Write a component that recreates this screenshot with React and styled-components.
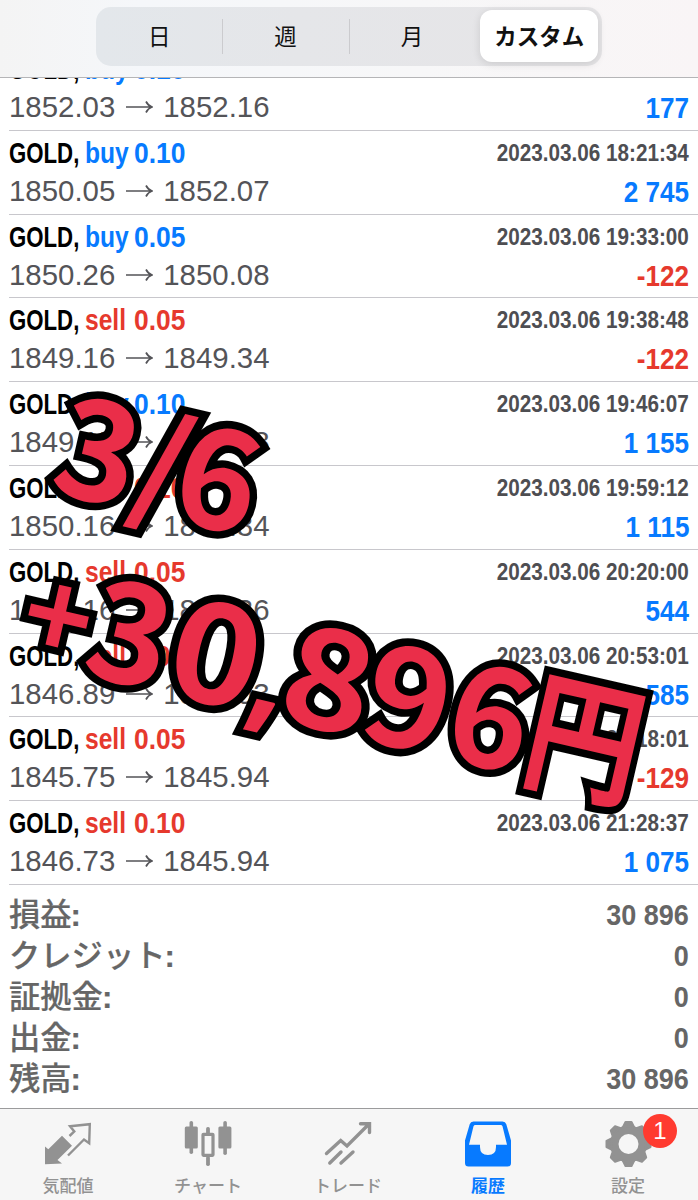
import React from "react";
import styled, { createGlobalStyle } from "styled-components";

const BLUE = "#077aff";
const RED = "#e6392d";
const GRAY = "#929292";

const latin = `"Liberation Sans", Arial, "Noto Sans CJK JP", sans-serif`;
const japanese = `"Noto Sans CJK JP", "Liberation Sans", sans-serif`;

const GlobalStyle = createGlobalStyle`
  * {
    box-sizing: border-box;
  }
  body {
    margin: 0;
    background-color: #ffffff;
    font-family: ${latin};
  }
`;

const Styled = {
  Screen: styled.div`
    position: relative;
    display: flex;
    flex-direction: column;
    width: 698px;
    height: 1200px;
    overflow: hidden;
    background-color: #ffffff;
  `,
  Header: styled.header`
    flex: none;
    height: 78px;
    padding: 7px 96px 0;
    background: linear-gradient(90deg, #f4f4f4 0%, #f5f7fa 20%, #f7f7f8 60%, #f9f5f6 100%);
    border-bottom: 1px solid #b5b5b7;
  `,
  Segments: styled.div`
    display: flex;
    width: 506px;
    height: 59px;
    padding: 3px 4px 4px 0;
    border-radius: 15px;
    background: linear-gradient(90deg, #e3e7eb 0%, #e5e6e9 40%, #e6e5e7 100%);
  `,
  Segment: styled.button`
    flex: none;
    display: flex;
    align-items: center;
    justify-content: center;
    width: ${(props) => (props.$active ? "118px" : "126.4px")};
    height: 52px;
    margin: 0 0 0 ${(props) => (props.$active ? "5px" : "0")};
    padding: 0 0 2px;
    border: 0;
    border-radius: 12px;
    background-color: ${(props) => (props.$active ? "#ffffff" : "transparent")};
    box-shadow: ${(props) => (props.$active ? "0 2px 8px rgba(0, 0, 0, 0.12)" : "none")};
    color: #111111;
    font-family: ${japanese};
    font-size: 22.5px;
    font-weight: ${(props) => (props.$active ? 700 : 400)};
  `,
  Divider: styled.div`
    flex: none;
    width: 1px;
    height: 35px;
    margin: 9px -1px 0 0;
    background-color: #cbcbce;
  `,
  List: styled.main`
    flex: none;
    height: 807px;
    padding-left: 9px;
    overflow: hidden;
  `,
  Rows: styled.div`
    margin-top: -31px;
  `,
  Row: styled.div`
    height: 83.8px;
    padding: 7px 9px 0 0;
    border-bottom: 1px solid #c8c7cc;
  `,
  Line: styled.div`
    display: flex;
    align-items: baseline;
    height: 38px;
    line-height: 30px;
  `,
  Narrow: styled.span`
    flex: none;
    width: ${(props) => (props.$width ? `${props.$width}px` : "auto")};
    margin-left: ${(props) => (props.$right ? "auto" : "0")};
    color: ${(props) => props.$color};
    font-size: ${(props) => props.$size || 30}px;
    font-weight: 700;
    white-space: nowrap;
    transform: translateY(${(props) => props.$drop || 0}px) scaleX(${(props) => props.$scale});
    transform-origin: ${(props) => (props.$right ? "right" : "left")} center;
  `,
  Prices: styled.span`
    display: flex;
    align-items: center;
    gap: 10.5px;
    color: #545458;
    font-size: 29.4px;
  `,
  Summary: styled.section`
    flex: none;
    height: 223px;
    padding: 10px 9px 0 9px;
  `,
  SummaryRow: styled.div`
    display: flex;
    align-items: center;
    height: 41px;
    color: #666666;
    line-height: 41px;
  `,
  SummaryLabel: styled.span`
    font-size: 31.3px;
    font-weight: 500;
    -webkit-text-stroke: 0.2px #666666;
  `,
  Colon: styled.span`
    margin-left: -1px;
    font-weight: 700;
  `,
  TabBar: styled.nav`
    display: flex;
    flex: none;
    height: 92px;
    margin-left: -2px;
    border-top: 1px solid #9b9b9c;
    background-color: #f6f6f6;
  `,
  Tab: styled.div`
    display: flex;
    flex-direction: column;
    align-items: center;
    width: 140px;
    padding-top: 11px;
    color: ${(props) => (props.$active ? BLUE : GRAY)};
    font-family: ${japanese};
    font-size: 17px;
    font-weight: ${(props) => (props.$active ? 700 : 500)};
    line-height: 20px;
  `,
  IconBox: styled.div`
    position: relative;
    width: 50px;
    height: 50px;
    margin-bottom: 5px;
  `,
  Badge: styled.span`
    position: absolute;
    top: -6px;
    left: 40px;
    width: 34px;
    height: 34px;
    border-radius: 50%;
    background-color: #ff3b30;
    color: #ffffff;
    font-family: ${latin};
    font-size: 24px;
    font-weight: 400;
    line-height: 34px;
    text-align: center;
  `,
  Caption: styled.div`
    position: absolute;
    left: ${(props) => props.$x}px;
    top: ${(props) => props.$y}px;
    display: flex;
    align-items: baseline;
    color: #ea2e49;
    font-weight: 700;
    line-height: 140px;
    transform: rotate(13deg);
    transform-origin: 0 0;
    -webkit-text-stroke: 15px #000000;
    paint-order: stroke fill;
    stroke-linejoin: round;
  `,
  Glyph: styled.span`
    flex: none;
    display: flex;
    justify-content: center;
    width: ${(props) => props.$width}px;
    font-family: ${(props) => props.$font || japanese};
    font-size: ${(props) => props.$size || 139}px;
    transform: translateY(${(props) => -props.$lift || 0}px) scaleX(${(props) => props.$scale || 1});
  `,
};

const segments = ["日", "週", "月", "カスタム"];

const deals = [
  { side: "buy", lots: "0.10", open: "1852.03", close: "1852.16", time: "2023.03.06 18:10:46", profit: "177" },
  { side: "buy", lots: "0.10", open: "1850.05", close: "1852.07", time: "2023.03.06 18:21:34", profit: "2 745" },
  { side: "buy", lots: "0.05", open: "1850.26", close: "1850.08", time: "2023.03.06 19:33:00", profit: "-122" },
  { side: "sell", lots: "0.05", open: "1849.16", close: "1849.34", time: "2023.03.06 19:38:48", profit: "-122" },
  { side: "buy", lots: "0.10", open: "1849.15", close: "1849.98", time: "2023.03.06 19:46:07", profit: "1 155" },
  { side: "sell", lots: "0.10", open: "1850.16", close: "1849.34", time: "2023.03.06 19:59:12", profit: "1 115" },
  { side: "sell", lots: "0.05", open: "1849.16", close: "1848.36", time: "2023.03.06 20:20:00", profit: "544" },
  { side: "sell", lots: "0.05", open: "1846.89", close: "1846.03", time: "2023.03.06 20:53:01", profit: "585" },
  { side: "sell", lots: "0.05", open: "1845.75", close: "1845.94", time: "2023.03.06 21:18:01", profit: "-129" },
  { side: "sell", lots: "0.10", open: "1846.73", close: "1845.94", time: "2023.03.06 21:28:37", profit: "1 075" },
];

const totals = [
  { label: "損益", value: "30 896" },
  { label: "クレジット", value: "0" },
  { label: "証拠金", value: "0" },
  { label: "出金", value: "0" },
  { label: "残高", value: "30 896" },
];

const dateGlyphs = [
  { char: "3", width: 75 },
  { char: "/", width: 57, size: 125, lift: 5, scale: 1.15 },
  { char: "6", width: 57 },
];

const totalGlyphs = [
  { char: "+", width: 58, size: 116, lift: 8 },
  { char: "3", width: 90 },
  { char: "0", width: 86, scale: 1.1 },
  { char: ",", width: 30, size: 134, font: `"Noto Sans", sans-serif` },
  { char: "8", width: 86, scale: 1.1 },
  { char: "9", width: 77, scale: 1.05 },
  { char: "6", width: 92, scale: 0.99 },
  { char: "円", width: 101, size: 134, scale: 0.87 },
];

const Arrow = () => (
  <svg width="27" height="14" viewBox="0 0 27 14" fill="none" stroke="#545458" strokeWidth="1.7">
    <path d="M0 7H26M20 1.5C21.5 4.5 23.5 6.2 26 7C23.5 7.8 21.5 9.5 20 12.5" />
  </svg>
);

const QuotesIcon = () => (
  <svg width="50" height="50" viewBox="0 0 50 50">
    <path d="M2 26.5L5.3 29.3L19 15.7L29 25.7L14.5 40L19 43.6L2 44.3Z" fill="currentColor" />
    <path
      d="M26.5 16L31.3 11.5L27 6.2L46.8 4.2L46.2 23.2L41 19.5L25 35.5"
      fill="none"
      stroke="currentColor"
      strokeWidth="2.4"
    />
  </svg>
);

const ChartIcon = () => (
  <svg width="50" height="50" viewBox="0 0 50 50" fill="currentColor">
    <rect x="6.5" y="1" width="3.6" height="33" rx="1.8" />
    <rect x="1.8" y="6.5" width="13" height="22" rx="1.5" />
    <rect x="40.3" y="1" width="3.6" height="34" rx="1.8" />
    <rect x="35.4" y="6.5" width="13" height="22" rx="1.5" />
    <rect x="23.1" y="7" width="3.8" height="7" rx="1.7" />
    <rect x="23.1" y="36" width="3.8" height="10" rx="1.7" />
    <rect x="20" y="14.3" width="10" height="21" rx="0.5" fill="none" stroke="currentColor" strokeWidth="3.2" />
  </svg>
);

const TradeIcon = () => (
  <svg
    width="50"
    height="50"
    viewBox="0 0 50 50"
    fill="none"
    stroke="currentColor"
    strokeWidth="3.4"
    strokeLinecap="round"
  >
    <path d="M3.5 33.5L17.7 20.5L24 26L45.5 4.5M37.5 3.7H46.5V12.5" />
    <path d="M6.8 43L18 32" />
    <path d="M18 43L30 32" />
  </svg>
);

const HistoryIcon = () => (
  <svg width="50" height="50" viewBox="0 0 50 50">
    <path
      fillRule="evenodd"
      fill="currentColor"
      d="M10.5 1.5H39.5Q42.4 1.5 43.3 4.2L48 20.5V43Q48 46.5 44.5 46.5H5.5Q2 46.5 2 43V20.5L6.7 4.2Q7.6 1.5 10.5 1.5ZM12.3 5Q11 5 10.5 6.3L6 24.8H17V27Q17 35 25 35Q33 35 33 27V24.8H44L39.5 6.3Q39 5 37.7 5Z"
    />
  </svg>
);

const SettingsIcon = () => (
  <svg width="50" height="50" viewBox="0 0 50 50">
    <g fill="currentColor" stroke="currentColor" strokeWidth="2" strokeLinejoin="round">
      {[0, 45, 90, 135].map((angle) => (
        <path key={angle} d="M22.5 2H28.5L31.5 8V40L28.5 46H22.5L19.5 40V8Z" transform={`rotate(${angle} 25.5 24)`} />
      ))}
      <circle cx="25.5" cy="24" r="17.5" />
    </g>
    <circle cx="25.5" cy="24" r="10" fill="#f6f6f6" />
  </svg>
);

const tabs = [
  { label: "気配値", Icon: QuotesIcon },
  { label: "チャート", Icon: ChartIcon },
  { label: "トレード", Icon: TradeIcon },
  { label: "履歴", Icon: HistoryIcon, active: true },
  { label: "設定", Icon: SettingsIcon, badge: "1" },
];

const DealRow = ({ deal }) => {
  const sideColor = deal.side === "buy" ? BLUE : RED;
  return (
    <Styled.Row>
      <Styled.Line>
        <Styled.Narrow $color="#000000" $width={76} $scale={0.74}>
          GOLD,
        </Styled.Narrow>
        <Styled.Narrow $color={sideColor} $width={49} $scale={0.82}>
          {deal.side}
        </Styled.Narrow>
        <Styled.Narrow $color={sideColor} $scale={0.88}>
          {deal.lots}
        </Styled.Narrow>
        <Styled.Narrow $right $drop={-2} $color="#4e4e52" $size={24} $scale={0.862}>
          {deal.time}
        </Styled.Narrow>
      </Styled.Line>
      <Styled.Line>
        <Styled.Prices>
          {deal.open}
          <Arrow />
          {deal.close}
        </Styled.Prices>
        <Styled.Narrow $right $drop={1} $color={deal.profit.startsWith("-") ? RED : BLUE} $scale={0.87}>
          {deal.profit}
        </Styled.Narrow>
      </Styled.Line>
    </Styled.Row>
  );
};

const RotatedCaption = ({ x, y, glyphs }) => (
  <Styled.Caption $x={x} $y={y}>
    {glyphs.map(({ char, width, size, font, scale, lift }, i) => (
      <Styled.Glyph key={i} $width={width} $size={size} $font={font} $scale={scale} $lift={lift}>
        {char}
      </Styled.Glyph>
    ))}
  </Styled.Caption>
);

const App = () => (
  <Styled.Screen>
    <GlobalStyle />
    <Styled.Header>
      <Styled.Segments>
        {segments.map((name, i) => (
          <React.Fragment key={name}>
            {(i === 1 || i === 2) && <Styled.Divider />}
            <Styled.Segment $active={i === 3}>{name}</Styled.Segment>
          </React.Fragment>
        ))}
      </Styled.Segments>
    </Styled.Header>
    <Styled.List>
      <Styled.Rows>
        {deals.map((deal) => (
          <DealRow key={deal.time} deal={deal} />
        ))}
      </Styled.Rows>
    </Styled.List>
    <Styled.Summary>
      {totals.map((item) => (
        <Styled.SummaryRow key={item.label}>
          <Styled.SummaryLabel>
            {item.label}
            <Styled.Colon>:</Styled.Colon>
          </Styled.SummaryLabel>
          <Styled.Narrow $right $drop={-1} $color="#666666" $scale={0.9}>
            {item.value}
          </Styled.Narrow>
        </Styled.SummaryRow>
      ))}
    </Styled.Summary>
    <Styled.TabBar>
      {tabs.map(({ label, Icon, active, badge }) => (
        <Styled.Tab key={label} $active={active}>
          <Styled.IconBox>
            <Icon />
            {badge && <Styled.Badge>{badge}</Styled.Badge>}
          </Styled.IconBox>
          {label}
        </Styled.Tab>
      ))}
    </Styled.TabBar>
    <RotatedCaption x={80} y={365} glyphs={dateGlyphs} />
    <RotatedCaption x={48} y={533} glyphs={totalGlyphs} />
  </Styled.Screen>
);

export default App;
